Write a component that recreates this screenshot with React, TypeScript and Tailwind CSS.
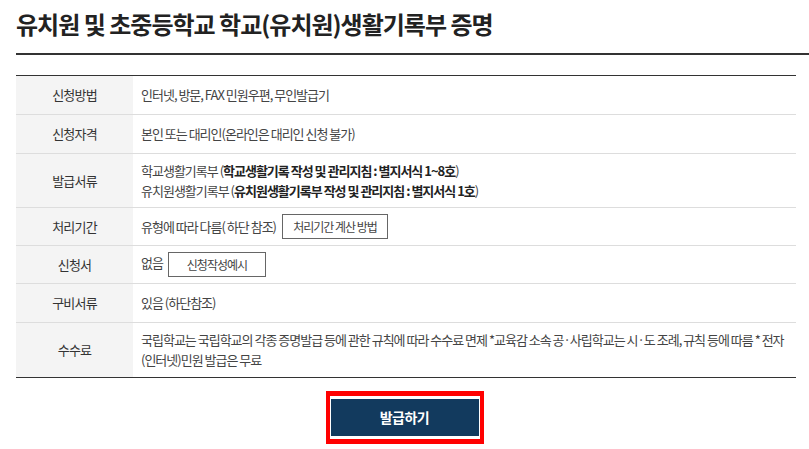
const rows: { label: string; h: string; content: React.ReactNode }[] = [
  { label: "신청방법", h: "h-[39px]", content: <span>인터넷, 방문, FAX 민원우편, 무인발급기</span> },
  { label: "신청자격", h: "h-[39px]", content: <span>본인 또는 대리인(온라인은 대리인 신청 불가)</span> },
  {
    label: "발급서류",
    h: "h-[54px]",
    content: (
      <div>
        <p>
          학교생활기록부 (<b className="font-bold text-[#222]">학교생활기록 작성 및 관리지침 : 별지서식 1~8호</b>)
        </p>
        <p>
          유치원생활기록부 (<b className="font-bold text-[#222]">유치원생활기록부 작성 및 관리지침 : 별지서식 1호</b>)
        </p>
      </div>
    ),
  },
  {
    label: "처리기간",
    h: "h-[38px]",
    content: (
      <div className="flex items-center gap-[6px]">
        <span>유형에 따라 다름( 하단 참조)</span>
        <button className="h-[25px] w-[106px] border border-[#666] bg-white text-[12px] text-[#444]">처리기간 계산 방법</button>
      </div>
    ),
  },
  {
    label: "신청서",
    h: "h-[38px]",
    content: (
      <div className="flex items-center gap-[5px]">
        <span className="-mt-[3px]">없음</span>
        <button className="h-[25px] w-[98px] border border-[#666] bg-white text-[12px] text-[#444]">신청작성예시</button>
      </div>
    ),
  },
  { label: "구비서류", h: "h-[39px]", content: <span>있음 (하단참조)</span> },
  {
    label: "수수료",
    h: "h-[54px]",
    content: (
      <p>
        국립학교는 국립학교의 각종 증명발급 등에 관한 규칙에 따라 수수료 면제 *교육감 소속 공·사립학교는 시·도 조례, 규칙 등에 따름 * 전자
        (인터넷)민원 발급은 무료
      </p>
    ),
  },
];

export default function App() {
  return (
    <div className="w-[809px] h-[449px] overflow-hidden bg-white pl-4 font-['Noto_Sans_CJK_KR',sans-serif] text-[#333]">
      <h1 className="border-b-2 border-[#333] pt-[9px] pb-[14px] text-[24px] leading-[30px] font-bold tracking-[-1px] text-[#222]">
        유치원 및 초중등학교 학교(유치원)생활기록부 증명
      </h1>

      <div className="mr-[13px] mt-[20px] border-t border-b border-t-[#333] border-b-[#333]">
        {rows.map((r, i) => (
          <div
            key={r.label}
            className={`flex ${r.h} ${i < rows.length - 1 ? "border-b border-[#ddd]" : ""}`}
          >
            <div className="flex w-[117px] shrink-0 items-center justify-center bg-[#f4f4f4] text-[13px] tracking-[-0.8px] text-[#333]">
              {r.label}
            </div>
            <div className="flex flex-1 items-center pl-[8px] pr-[4px] text-[13px] leading-[20px] tracking-[-1px] text-[#444]">
              {r.content}
            </div>
          </div>
        ))}
      </div>

      <div className="mt-[13px] flex justify-center pr-4">
        <div className="border-x-4 border-y-[5px] border-[#ff0000] bg-white px-[1px] py-[3px]">
          <button className="h-[37px] w-[148px] bg-[#123a5e] text-[14px] font-bold tracking-[-0.5px] text-white">발급하기</button>
        </div>
      </div>
    </div>
  );
}
